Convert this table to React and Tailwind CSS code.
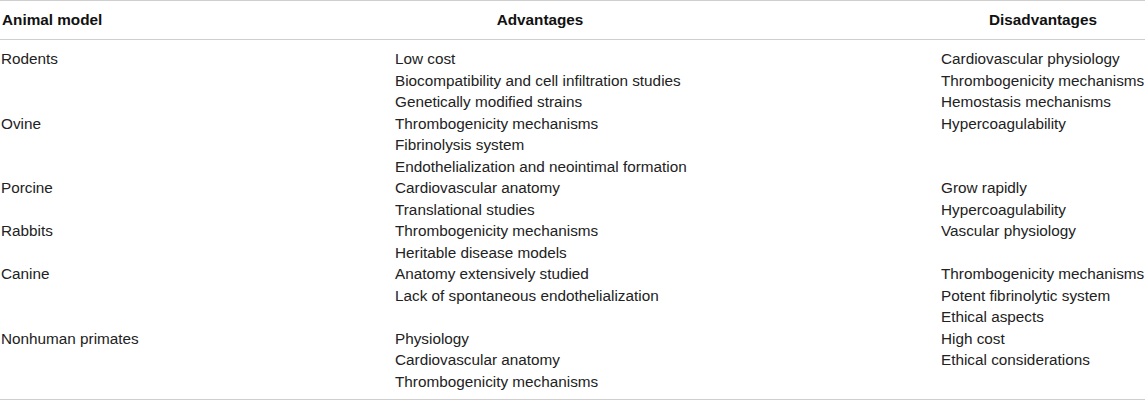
const rows = [
  {
    model: 'Rodents',
    pros: ['Low cost', 'Biocompatibility and cell infiltration studies', 'Genetically modified strains'],
    cons: ['Cardiovascular physiology', 'Thrombogenicity mechanisms', 'Hemostasis mechanisms'],
  },
  {
    model: 'Ovine',
    pros: ['Thrombogenicity mechanisms', 'Fibrinolysis system', 'Endothelialization and neointimal formation'],
    cons: ['Hypercoagulability'],
  },
  {
    model: 'Porcine',
    pros: ['Cardiovascular anatomy', 'Translational studies'],
    cons: ['Grow rapidly', 'Hypercoagulability'],
  },
  {
    model: 'Rabbits',
    pros: ['Thrombogenicity mechanisms', 'Heritable disease models'],
    cons: ['Vascular physiology'],
  },
  {
    model: 'Canine',
    pros: ['Anatomy extensively studied', 'Lack of spontaneous endothelialization'],
    cons: ['Thrombogenicity mechanisms', 'Potent fibrinolytic system', 'Ethical aspects'],
  },
  {
    model: 'Nonhuman primates',
    pros: ['Physiology', 'Cardiovascular anatomy', 'Thrombogenicity mechanisms'],
    cons: ['High cost', 'Ethical considerations'],
  },
];

export default function App() {
  return (
    <div
      className="w-[1145px] h-[401px] bg-white text-[#222] text-[15.3px] leading-[21.5px] overflow-hidden"
      style={{ fontFamily: '"Liberation Sans", Arial, sans-serif' }}
    >
      <div className="border-t border-b border-[#cfcfcf]">
        {/* Header */}
        <div className="grid grid-cols-[395px_546px_1fr] h-[39px] items-center border-b border-[#cfcfcf] font-bold text-[#111]">
          <div className="pl-[2px]">Animal model</div>
          <div className="w-[290px] text-center">Advantages</div>
          <div className="text-center">Disadvantages</div>
        </div>

        {/* Body */}
        <div className="pt-[8px] pb-[7px]">
          {rows.map((row) => (
            <div key={row.model} className="grid grid-cols-[395px_546px_1fr] items-start">
              <div className="pl-[1px]">{row.model}</div>
              <div>
                {row.pros.map((p) => (
                  <div key={p}>{p}</div>
                ))}
              </div>
              <div className="whitespace-nowrap">
                {row.cons.map((c) => (
                  <div key={c}>{c}</div>
                ))}
              </div>
            </div>
          ))}
        </div>
      </div>
    </div>
  );
}
